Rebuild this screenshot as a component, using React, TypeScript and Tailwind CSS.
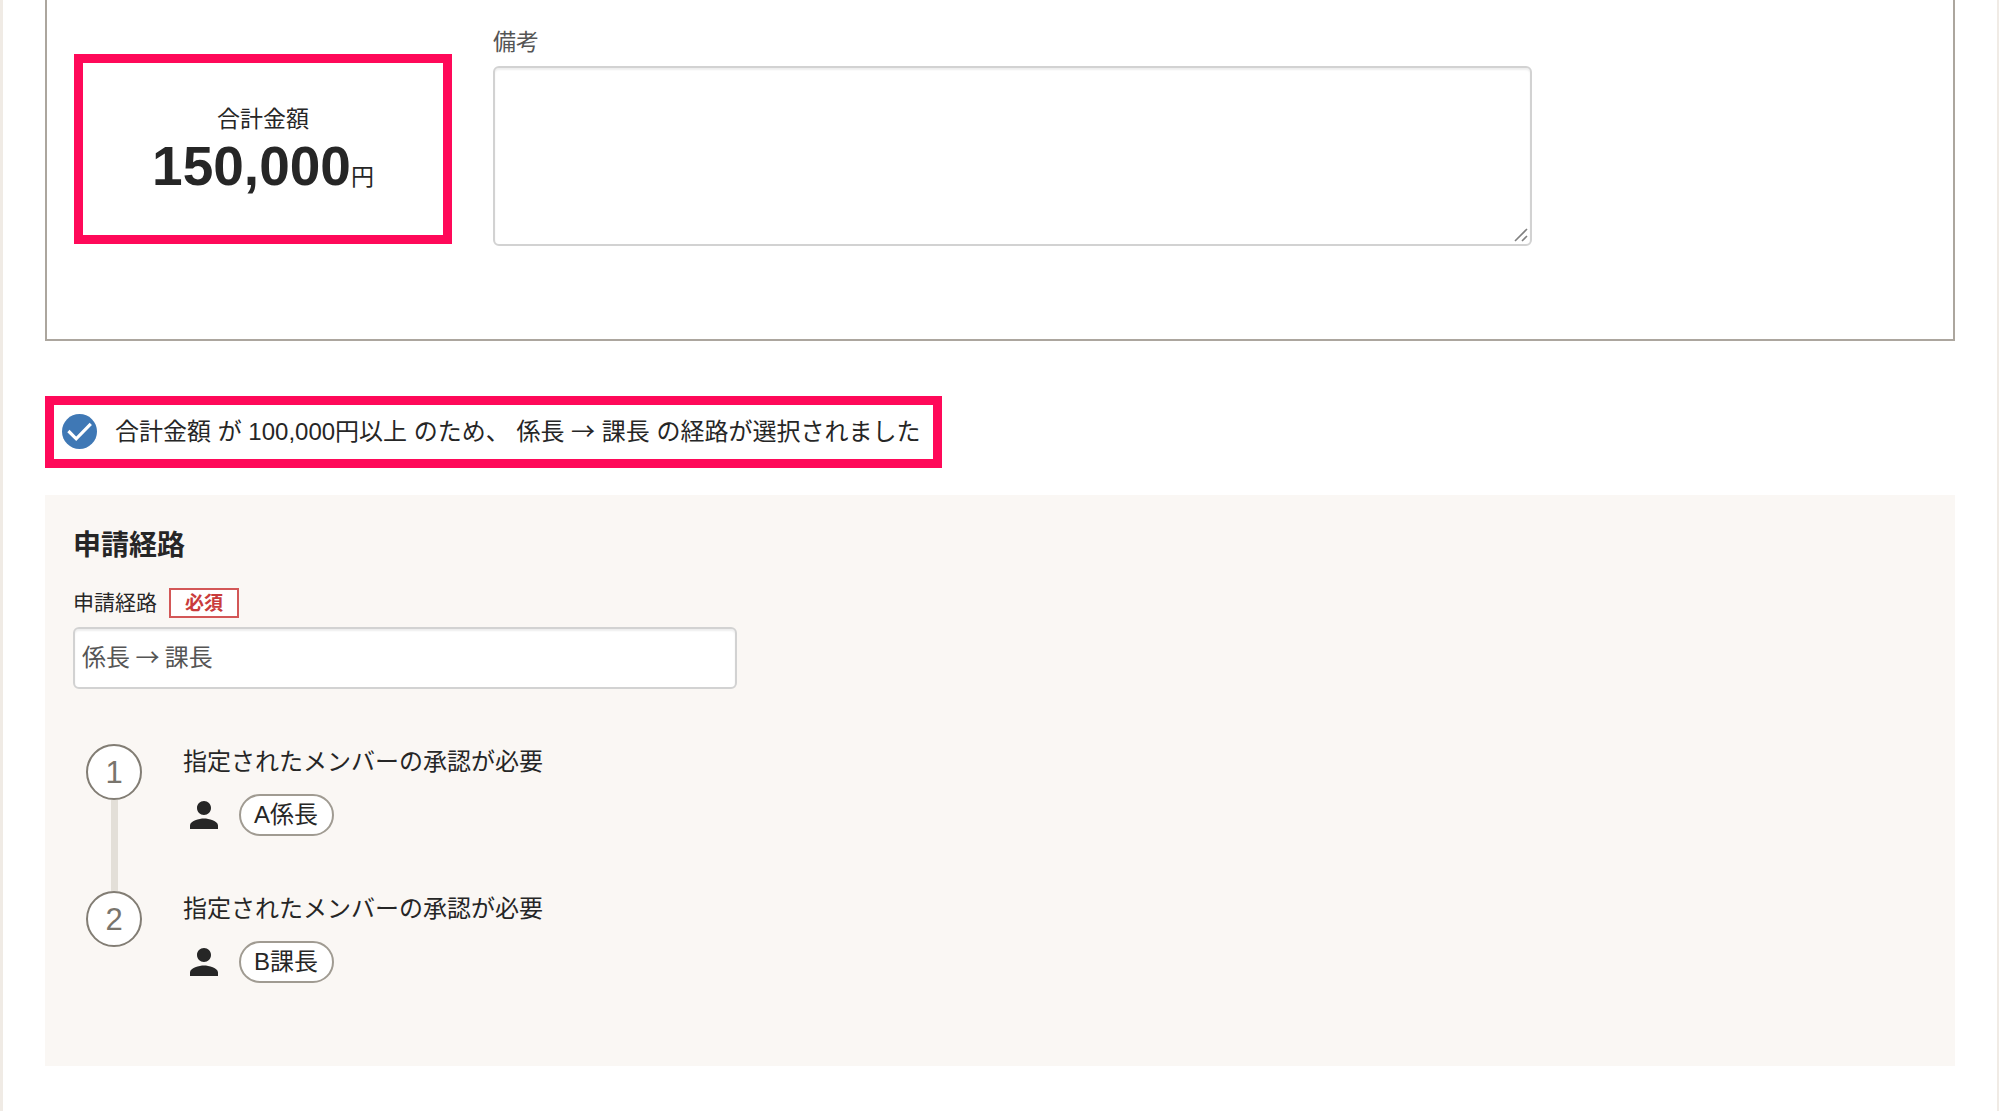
import { useState } from "react";

interface IStep {
  title: string;
  member: string;
}

interface IStepItemProps {
  step: IStep;
  index: number;
  isLast: boolean;
}

const steps: IStep[] = [
  { title: "指定されたメンバーの承認が必要", member: "A係長" },
  { title: "指定されたメンバーの承認が必要", member: "B課長" },
];

const PersonIcon = () => (
  <svg className="size-[42px]" viewBox="0 0 24 24" fill="currentColor" aria-hidden="true">
    <path d="M12 12c2.21 0 4-1.79 4-4s-1.79-4-4-4-4 1.79-4 4 1.79 4 4 4zm0 2c-2.67 0-8 1.34-8 4v2h16v-2c0-2.66-5.33-4-8-4z" />
  </svg>
);

const CheckIcon = () => (
  <svg className="size-[35px] shrink-0" viewBox="0 0 35 35" aria-hidden="true">
    <circle cx="17.5" cy="17.5" r="17.5" fill="#3f78b5" />
    <path d="M6.4 17l7.8 7.8L28.8 9.8" fill="none" stroke="#fff" strokeWidth="3.2" />
  </svg>
);

const ResizeHandle = () => (
  <svg
    className="pointer-events-none absolute right-1 bottom-1 h-3.5 w-3.5"
    viewBox="0 0 14 14"
    stroke="#808080"
    strokeWidth="1.6"
    aria-hidden="true"
  >
    <path d="M1 13L13 1M8 13l5-5" fill="none" />
  </svg>
);

const StepItem: React.FC<IStepItemProps> = ({ step, index, isLast }) => {
  return (
    <li className="flex gap-[41px]">
      <div className="flex flex-col items-center">
        <div className="flex size-14 items-center justify-center rounded-full border-2 border-[#827d74] bg-white text-[31px] leading-none text-[#79756d]">
          {index + 1}
        </div>
        {!isLast && <div className="w-[7px] flex-1 bg-[#e3dfd8]" />}
      </div>
      <div className={isLast ? "" : "pb-[55px]"}>
        <p className="text-2xl leading-9">{step.title}</p>
        <div className="mt-3.5 flex items-center gap-3.5">
          <PersonIcon />
          <span className="flex h-[42px] items-center rounded-full border-2 border-[#a09b92] bg-white pr-3.5 pl-[13px] text-2xl leading-9">
            {step.member}
          </span>
        </div>
      </div>
    </li>
  );
};

const App: React.FC = () => {
  const [note, setNote] = useState("");
  const [route, setRoute] = useState("係長 → 課長");

  return (
    <div
      lang="ja"
      className="min-h-screen border-l-3 border-r-2 border-[#f0ebe5] bg-white px-[42px] pb-[45px] font-['Liberation_Sans','Noto_Sans_CJK_JP',sans-serif] text-[#262626]"
    >
      <section className="flex items-start gap-[41px] border-x-2 border-b-2 border-[#aca69e] pr-7 pb-[93px] pl-[27px]">
        <div className="mt-[54px] flex h-[190px] w-[378px] shrink-0 flex-col items-center border-9 border-[#ff0959] pt-10">
          <p className="text-[23px] leading-8">合計金額</p>
          <p className="leading-[62px]">
            <span className="text-[55px] font-bold">150,000</span>
            <span className="text-[23px]">円</span>
          </p>
        </div>
        <div className="flex max-w-[1039px] flex-1 flex-col pt-[26px]">
          <label htmlFor="note" className="text-[23px] leading-8 text-[#555]">
            備考
          </label>
          <div className="relative mt-2">
            <textarea
              id="note"
              className="block h-[180px] w-full resize-none rounded-md border-2 border-[#d2d2d2] bg-white p-2 text-2xl text-[#555] shadow-[inset_0_2px_2px_rgba(0,0,0,0.07)]"
              value={note}
              onChange={(e) => setNote(e.target.value)}
            />
            <ResizeHandle />
          </div>
        </div>
      </section>

      <div className="mt-[55px] flex h-[72px] w-full max-w-[897px] items-center gap-[18px] border-9 border-[#ff0959] pb-0.5 pl-2">
        <CheckIcon />
        <p className="text-2xl leading-9">
          合計金額 が 100,000円以上 のため、 係長{" "}
          <span className="font-['Noto_Sans_CJK_JP',sans-serif]">→</span> 課長 の経路が選択されました
        </p>
      </div>

      <section className="mt-[27px] bg-[#faf7f4] px-7 pt-[31px] pb-[83px]">
        <h2 className="text-[28px] leading-10 font-bold">申請経路</h2>
        <div className="mt-[22px] flex h-[30px] items-center gap-3">
          <label htmlFor="route" className="text-[21px]">
            申請経路
          </label>
          <span className="flex h-[30px] items-center border-2 border-[#d35757] bg-white px-3.5 pt-0.5 text-[19px] font-bold text-[#c93c3c]">
            必須
          </span>
        </div>
        <input
          id="route"
          type="text"
          className="mt-[9px] block h-[62px] w-full max-w-[664px] rounded-md border-2 border-[#d2d2d2] bg-white px-[7px] pb-1.5 font-['Noto_Sans_CJK_JP',sans-serif] text-2xl text-[#555] shadow-[inset_0_2px_2px_rgba(0,0,0,0.07)]"
          value={route}
          onChange={(e) => setRoute(e.target.value)}
        />
        <ol className="mt-[55px] pl-[13px]">
          {steps.map((step, i) => (
            <StepItem key={step.member} step={step} index={i} isLast={i === steps.length - 1} />
          ))}
        </ol>
      </section>
    </div>
  );
};

export default App;
